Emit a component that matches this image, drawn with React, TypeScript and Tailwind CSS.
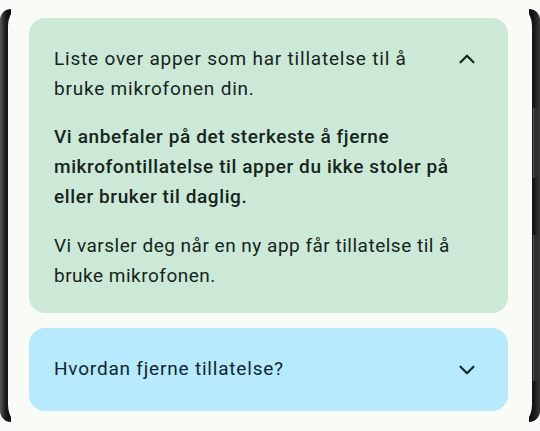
import { ChevronDown, ChevronUp } from 'lucide-react'

const font = { fontFamily: 'Roboto, "Noto Sans", sans-serif' }

function Frame({ side }: { side: 'left' | 'right' }) {
  const isLeft = side === 'left'
  return (
    <div
      className={`flex flex-col shrink-0 w-[11px] my-[9px] bg-[#161616] ${
        isLeft ? 'rounded-l-[14px] bg-gradient-to-r from-[#5a5a5a] via-[#1c1c1c] to-[#0d0d0d]' : 'rounded-r-[14px] bg-gradient-to-l from-[#3a3a3a] via-[#1a1a1a] to-[#0d0d0d]'
      }`}
    >
      {!isLeft && (
        <>
          <div className="mt-[99px] ml-[4px] w-[5px] h-[70px] bg-[#2f2f2f] border-l border-[#555]" />
          <div className="mt-[57px] ml-[4px] w-[5px] h-[146px] bg-[#2f2f2f] border-l border-[#555]" />
        </>
      )}
    </div>
  )
}

export default function App() {
  return (
    <div className="w-[540px] h-[431px] flex bg-[#f9fbf6] overflow-hidden" style={font}>
      <Frame side="left" />
      <div className="flex-1 -mx-[3px] relative z-10 bg-[#f9fbf6] rounded-[26px] pl-[21px] pr-[24px] pt-[18px] flex flex-col gap-[15px]">
        {/* Expanded item */}
        <div className="rounded-[16px] bg-[#cce9d7] pl-[25px] pr-[28px] pt-[26px] pb-[22px] text-[#16241c] text-[19px] leading-[30px] tracking-[0.5px]">
          <div className="flex items-start justify-between gap-6">
            <p className="tracking-[0.8px]">Liste over apper som har tillatelse til å bruke mikrofonen din.</p>
            <ChevronUp className="shrink-0 mt-[2px]" size={26} strokeWidth={2} />
          </div>
          <p className="mt-[18px] font-medium tracking-[0.6px]">
            Vi anbefaler på det sterkeste å fjerne mikrofontillatelse til apper du ikke stoler på eller bruker til daglig.
          </p>
          <p className="mt-[19px]">Vi varsler deg når en ny app får tillatelse til å bruke mikrofonen.</p>
        </div>

        {/* Collapsed item */}
        <div className="rounded-[16px] bg-[#b6eafc] h-[83px] pl-[25px] pr-[28px] flex items-center justify-between text-[#0e2730] text-[19px] tracking-[0.8px]">
          <span>Hvordan fjerne tillatelse?</span>
          <ChevronDown size={26} strokeWidth={2} />
        </div>
      </div>
      <Frame side="right" />
    </div>
  )
}
